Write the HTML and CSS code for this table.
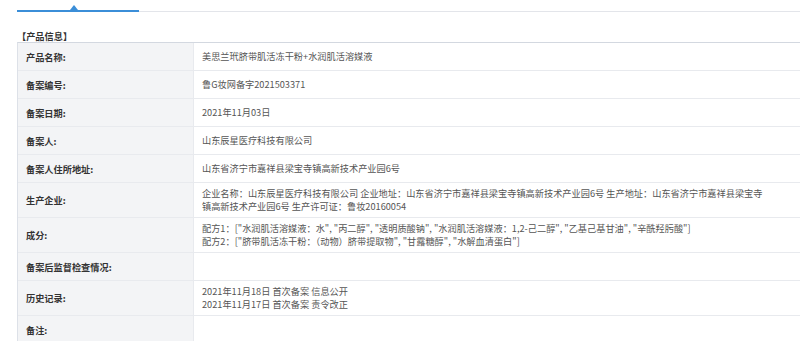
FILE: index.html
```html
<!DOCTYPE html>
<html lang="zh">
<head>
<meta charset="utf-8">
<title>产品信息</title>
<link rel="stylesheet" href="styles.css">
</head>
<body>
<div class="page">
  <div class="tabbar">
    <div class="tab-active"><span class="caret"></span></div>
    <div class="tab-rest"></div>
  </div>
  <div class="section-title">【产品信息】</div>
  <div class="info">
    <div class="row"><div class="label">产品名称:</div><div class="value">美思兰玳脐带肌活冻干粉+水润肌活溶媒液</div></div>
    <div class="row"><div class="label">备案编号:</div><div class="value">鲁G妆网备字2021503371</div></div>
    <div class="row"><div class="label">备案日期:</div><div class="value">2021年11月03日</div></div>
    <div class="row"><div class="label">备案人:</div><div class="value">山东辰星医疗科技有限公司</div></div>
    <div class="row"><div class="label">备案人住所地址:</div><div class="value">山东省济宁市嘉祥县梁宝寺镇高新技术产业园6号</div></div>
    <div class="row"><div class="label">生产企业:</div><div class="value">企业名称：山东辰星医疗科技有限公司 企业地址：山东省济宁市嘉祥县梁宝寺镇高新技术产业园6号 生产地址：山东省济宁市嘉祥县梁宝寺镇高新技术产业园6号 生产许可证：鲁妆20160054</div></div>
    <div class="row"><div class="label">成分:</div><div class="value"><span class="line">配方1：["水润肌活溶媒液：水", "丙二醇", "透明质酸钠", "水润肌活溶媒液：1,2-己二醇", "乙基己基甘油", "辛酰羟肟酸"]</span><span class="line">配方2：["脐带肌活冻干粉：（动物）脐带提取物", "甘露糖醇", "水解血清蛋白"]</span></div></div>
    <div class="row"><div class="label">备案后监督检查情况:</div><div class="value"></div></div>
    <div class="row"><div class="label">历史记录:</div><div class="value"><span class="line">2021年11月18日 首次备案 信息公开</span><span class="line">2021年11月17日 首次备案 责令改正</span></div></div>
    <div class="row"><div class="label">备注:</div><div class="value"></div></div>
  </div>
</div>
</body>
</html>
```

FILE: styles.css
```css
html, body {
  margin: 0;
  padding: 0;
  background: #ffffff;
}
body {
  font-family: "Noto Sans CJK SC", "Noto Sans", sans-serif;
  font-size: 9.2px;
  color: #555;
}
.page {
  padding-left: 17px;
}
.tabbar {
  display: flex;
  height: 12px;
  align-items: flex-end;
}
.tab-active {
  position: relative;
  width: 122px;
  height: 2px;
  background: #3b8ed8;
}
.caret {
  position: absolute;
  left: 53px;
  bottom: 2px;
  width: 0;
  height: 0;
  border-left: 4px solid transparent;
  border-right: 4px solid transparent;
  border-bottom: 5px solid #3b8ed8;
}
.tab-rest {
  flex: 1;
  height: 1px;
  background: #e3e5ea;
}
.section-title {
  margin-top: 18px;
  height: 12px;
  line-height: 12px;
  font-weight: bold;
  color: #333;
}
.info {
  border-top: 1px solid #d3d8e0;
  border-left: 1px solid #dde1e8;
}
.row {
  display: flex;
  min-height: 27px;
  border-bottom: 1px solid #e8eaee;
}
.label {
  width: 167px;
  flex: none;
  padding-left: 8px;
  display: flex;
  align-items: center;
  background: #f3f4f6;
  border-right: 1px solid #e8eaee;
  font-weight: bold;
  color: #333;
}
.value {
  flex: 1;
  padding: 4px 29px 4px 8px;
  line-height: 13px;
  align-self: center;
}
.line {
  display: block;
}
```
